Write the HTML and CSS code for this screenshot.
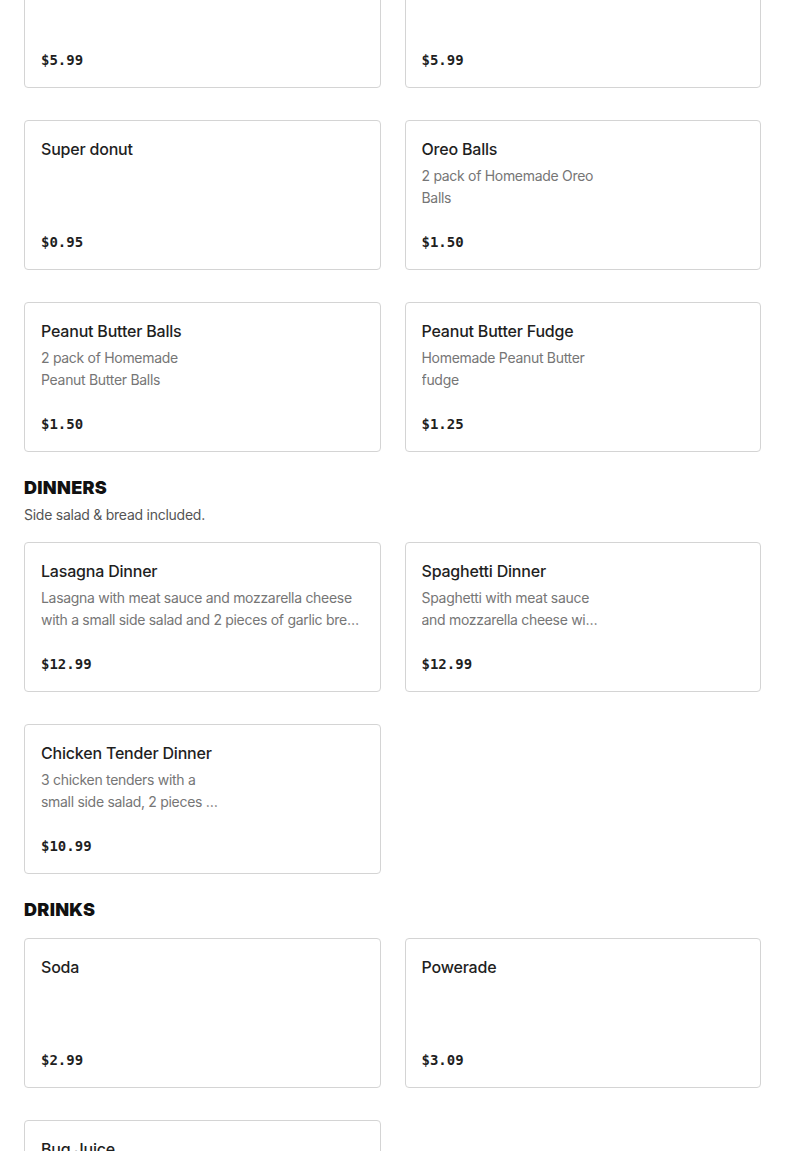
FILE: index.html
```html
<!DOCTYPE html>
<html lang="en">
<head>
<meta charset="utf-8">
<title>Menu</title>
<link rel="stylesheet" href="styles.css">
</head>
<body>
<main class="menu">
  <section class="section">
    <div class="grid">
      <div class="card">
        <div class="title">Cookie</div>
        <div class="desc narrow">1 homemade cookie</div>
        <div class="price">$5.99</div>
      </div>
      <div class="card">
        <div class="title">Brownie</div>
        <div class="desc narrow"></div>
        <div class="price">$5.99</div>
      </div>
      <div class="card">
        <div class="title">Super donut</div>
        <div class="desc narrow"></div>
        <div class="price">$0.95</div>
      </div>
      <div class="card">
        <div class="title">Oreo Balls</div>
        <div class="desc narrow">2 pack of Homemade Oreo Balls</div>
        <div class="price">$1.50</div>
      </div>
      <div class="card">
        <div class="title">Peanut Butter Balls</div>
        <div class="desc narrow">2 pack of Homemade Peanut Butter Balls</div>
        <div class="price">$1.50</div>
      </div>
      <div class="card">
        <div class="title">Peanut Butter Fudge</div>
        <div class="desc narrow">Homemade Peanut Butter fudge</div>
        <div class="price">$1.25</div>
      </div>
    </div>
  </section>

  <section class="section">
    <h2 class="heading">DINNERS</h2>
    <p class="subtitle">Side salad &amp; bread included.</p>
    <div class="grid">
      <div class="card">
        <div class="title">Lasagna Dinner</div>
        <div class="desc">Lasagna with meat sauce and mozzarella cheese with a small side salad and 2 pieces of garlic bread on the side</div>
        <div class="price">$12.99</div>
      </div>
      <div class="card">
        <div class="title">Spaghetti Dinner</div>
        <div class="desc narrow">Spaghetti with meat sauce and mozzarella cheese with a small side salad and 2 pieces of garlic bread</div>
        <div class="price">$12.99</div>
      </div>
      <div class="card">
        <div class="title">Chicken Tender Dinner</div>
        <div class="desc narrow">3 chicken tenders with a small side salad, 2 pieces of garlic bread</div>
        <div class="price">$10.99</div>
      </div>
    </div>
  </section>

  <section class="section">
    <h2 class="heading heading-solo">DRINKS</h2>
    <div class="grid">
      <div class="card">
        <div class="title">Soda</div>
        <div class="desc narrow"></div>
        <div class="price">$2.99</div>
      </div>
      <div class="card">
        <div class="title">Powerade</div>
        <div class="desc narrow"></div>
        <div class="price">$3.09</div>
      </div>
      <div class="card">
        <div class="title">Bug Juice</div>
        <div class="desc narrow"></div>
        <div class="price">$1.99</div>
      </div>
    </div>
  </section>
</main>
</body>
</html>
```

FILE: styles.css
```css
* {
  box-sizing: border-box;
}

body {
  margin: 0;
  background: #ffffff;
  font-family: Inter, "Noto Sans", "Liberation Sans", sans-serif;
  color: #1f1f1f;
}

.menu {
  margin-top: -62px;
  padding: 0 24px 40px;
}

.section + .section {
  margin-top: 24px;
}

.heading {
  margin: 0;
  font-size: 18px;
  line-height: 24px;
  font-weight: 900;
  letter-spacing: 0.3px;
  color: #111111;
}

.subtitle {
  margin: 4px 0 16px;
  font-size: 14px;
  line-height: 22px;
  letter-spacing: -0.25px;
  color: #555555;
}

.heading-solo {
  margin-bottom: 16px;
}

.grid {
  display: grid;
  grid-template-columns: 1fr 1fr;
  column-gap: 24px;
  row-gap: 32px;
}

.card {
  border: 1px solid #d4d4d4;
  border-radius: 4px;
  padding: 16px 16px 17px;
  background: #ffffff;
}

.title {
  font-size: 16px;
  line-height: 24px;
  font-weight: 500;
  letter-spacing: -0.2px;
  color: #1f1f1f;
}

.desc {
  margin-top: 4px;
  height: 44px;
  font-size: 14px;
  line-height: 22px;
  letter-spacing: -0.3px;
  color: #767676;
  display: -webkit-box;
  -webkit-box-orient: vertical;
  -webkit-line-clamp: 2;
  overflow: hidden;
}

.narrow {
  max-width: 180px;
}

.price {
  margin-top: 23px;
  font-family: "DejaVu Sans Mono", "Liberation Mono", monospace;
  font-size: 14px;
  line-height: 20px;
  font-weight: 700;
  color: #1f1f1f;
}
```
